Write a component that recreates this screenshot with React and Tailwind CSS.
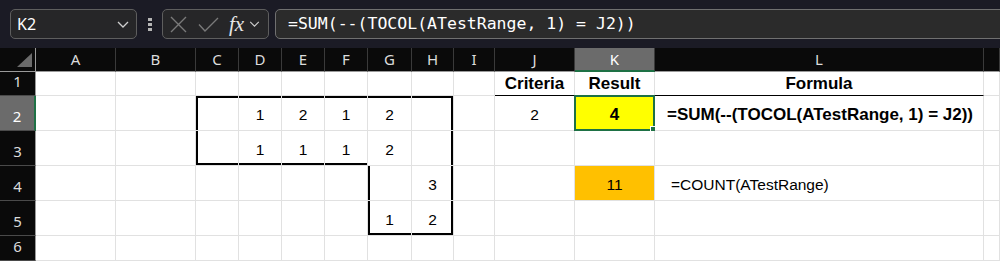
import React from "react";

const COLS = ["A", "B", "C", "D", "E", "F", "G", "H", "I", "J", "K", "L", ""];

// cell contents, keyed by address
const CELLS = {
  J1: { v: "Criteria", bold: true },
  K1: { v: "Result", bold: true },
  L1: { v: "Formula", bold: true },
  D2: { v: "1" },
  E2: { v: "2" },
  F2: { v: "1" },
  G2: { v: "2" },
  J2: { v: "2" },
  K2: { v: "4", bold: true },
  L2: { v: "=SUM(--(TOCOL(ATestRange, 1) = J2))", bold: true, left: "pl-[12px]" },
  D3: { v: "1" },
  E3: { v: "1" },
  F3: { v: "1" },
  G3: { v: "2" },
  H4: { v: "3" },
  K4: { v: "11" },
  L4: { v: "=COUNT(ATestRange)", left: "pl-[16px]" },
  G5: { v: "1" },
  H5: { v: "2" },
};

// thick outline around the test range
const EDGES = {
  C2: "shadow-[inset_2px_2px_0_#000]",
  D2: "shadow-[inset_0_2px_0_#000]",
  E2: "shadow-[inset_0_2px_0_#000]",
  F2: "shadow-[inset_0_2px_0_#000]",
  G2: "shadow-[inset_0_2px_0_#000]",
  H2: "shadow-[inset_-2px_2px_0_#000]",
  C3: "shadow-[inset_2px_-2px_0_#000]",
  D3: "shadow-[inset_0_-2px_0_#000]",
  E3: "shadow-[inset_0_-2px_0_#000]",
  F3: "shadow-[inset_0_-2px_0_#000]",
  H3: "shadow-[inset_-2px_0_0_#000]",
  G4: "shadow-[inset_2px_0_0_#000]",
  H4: "shadow-[inset_-2px_0_0_#000]",
  G5: "shadow-[inset_2px_-2px_0_#000]",
  H5: "shadow-[inset_-2px_-2px_0_#000]",
};

const FILLS = {
  K2: "bg-[#ffff00]",
  K4: "bg-[#ffc000]",
};

function Chevron({ className }) {
  return (
    <svg viewBox="0 0 12 7" className={className} fill="none" stroke="currentColor" strokeWidth="1.3">
      <path d="M1 1l5 5 5-5" />
    </svg>
  );
}

function Toolbar() {
  return (
    <div className="h-[48px] bg-[#1b1b25] flex items-center overflow-hidden">
      <div className="ml-[10px] w-[127px] h-[30px] rounded-[5px] border border-[#5e5e5e] bg-[#262628] flex items-center pl-[6px] pr-[7px]">
        <span className="text-[16px] text-white font-['Noto_Sans',sans-serif]">K2</span>
        <Chevron className="ml-auto w-[12px] h-[7px] text-[#cfcfcf]" />
      </div>
      <div className="ml-[11px] flex flex-col gap-[2px]">
        <span className="w-[4px] h-[3px] bg-[#b5b5b5]" />
        <span className="w-[4px] h-[3px] bg-[#b5b5b5]" />
        <span className="w-[4px] h-[3px] bg-[#b5b5b5]" />
      </div>
      <div className="ml-[10px] w-[107px] h-[30px] rounded-[5px] border border-[#5e5e5e] bg-[#262628] flex items-center pl-[7px]">
        <svg viewBox="0 0 17 17" className="w-[17px] h-[17px]" fill="none" stroke="#7a7a7a" strokeWidth="1.4">
          <path d="M1 1l15 15M16 1L1 16" />
        </svg>
        <svg viewBox="0 0 21 15" className="ml-[11px] w-[21px] h-[15px]" fill="none" stroke="#7a7a7a" strokeWidth="1.4">
          <path d="M1 7.5l6 6.5L20 1" />
        </svg>
        <span className="ml-[10px] text-[21px] leading-none italic text-[#e6e6e6] font-['Liberation_Serif',serif]">fx</span>
        <Chevron className="ml-[5px] w-[11px] h-[6px] text-[#cfcfcf]" />
      </div>
      <div className="ml-[6px] flex-1 -mr-[10px] h-[30px] rounded-l-[5px] border border-[#707070] bg-[#2b2b2b] flex items-center pl-[12px]">
        <span className="text-[16.5px] text-white font-['DejaVu_Sans_Mono',monospace] whitespace-pre">
          =SUM(--(TOCOL(ATestRange, 1) = J2))
        </span>
      </div>
    </div>
  );
}

function Cell({ addr }) {
  const c = CELLS[addr];
  const edge = EDGES[addr] || "";
  const fill = FILLS[addr] || "bg-white";
  const headRow = ["J1", "K1", "L1"].includes(addr);
  return (
    <div
      className={`relative flex items-center border-r border-b ${
        headRow ? "border-b-black pt-[1px]" : "border-b-[#e1e1e1] pt-[3px]"
      } border-r-[#e1e1e1] ${fill} ${edge} ${
        c && c.left ? "justify-start " + c.left : "justify-center"
      }`}
    >
      {c && (
        <span
          className={`whitespace-nowrap text-black font-['Liberation_Sans',sans-serif] ${
            c.bold ? "font-bold text-[17px]" : "text-[15.5px]"
          }`}
        >
          {c.v}
        </span>
      )}
      {addr === "K2" && (
        <div className="absolute -left-px -top-px -right-px -bottom-px border-2 border-[#1e7145]">
          <div className="absolute -right-[4px] -bottom-[4px] w-[7px] h-[7px] bg-[#1e7145] border border-white" />
        </div>
      )}
    </div>
  );
}

export default function App() {
  const rows = [1, 2, 3, 4, 5, 6];
  return (
    <div className="w-[1000px] h-[261px] overflow-hidden bg-white select-none">
      <Toolbar />
      <div className="grid grid-cols-[36px_80px_80px_43px_43px_43px_43px_44px_42px_41px_80px_80px_329px_1fr] grid-rows-[24px_24px_35px_35px_35px_35px_25px]">
        <div className="bg-[#0a0a0a] border-r border-b border-r-[#9a9a9a] border-b-[#9a9a9a] flex items-end justify-end pr-[3px] pb-[4px]">
          <svg viewBox="0 0 15 14" className="w-[15px] h-[14px]">
            <polygon points="15,0 15,14 0,14" fill="#6b6b6b" />
          </svg>
        </div>
        {COLS.map((col, i) =>
          col === "K" ? (
            <div
              key={i}
              className="bg-[#6b6b6b] border-r border-r-[#3a3a3a] border-b-2 border-b-[#1e7145] flex items-center justify-center text-[15px] text-white font-['Noto_Sans',sans-serif]"
            >
              {col}
            </div>
          ) : (
            <div
              key={i}
              className="bg-[#0a0a0a] border-r border-b border-r-[#3a3a3a] border-b-[#9a9a9a] flex items-center justify-center text-[15px] text-[#dcdcdc] font-['Noto_Sans',sans-serif]"
            >
              {col}
            </div>
          )
        )}
        {rows.map((r) => (
          <React.Fragment key={r}>
            {r === 2 ? (
              <div className="bg-[#6b6b6b] border-b border-b-[#4a4a4a] border-r-2 border-r-[#1e7145] flex items-end justify-center pb-[3px] text-[15px] text-white font-['Noto_Sans',sans-serif]">
                {r}
              </div>
            ) : (
              <div className="bg-[#0a0a0a] border-b border-r border-b-[#4a4a4a] border-r-[#9a9a9a] flex items-end justify-center pb-[3px] text-[15px] text-[#dcdcdc] font-['Noto_Sans',sans-serif]">
                {r}
              </div>
            )}
            {COLS.map((col, i) => (
              <Cell key={i} addr={col ? col + r : "M" + r} />
            ))}
          </React.Fragment>
        ))}
      </div>
    </div>
  );
}
